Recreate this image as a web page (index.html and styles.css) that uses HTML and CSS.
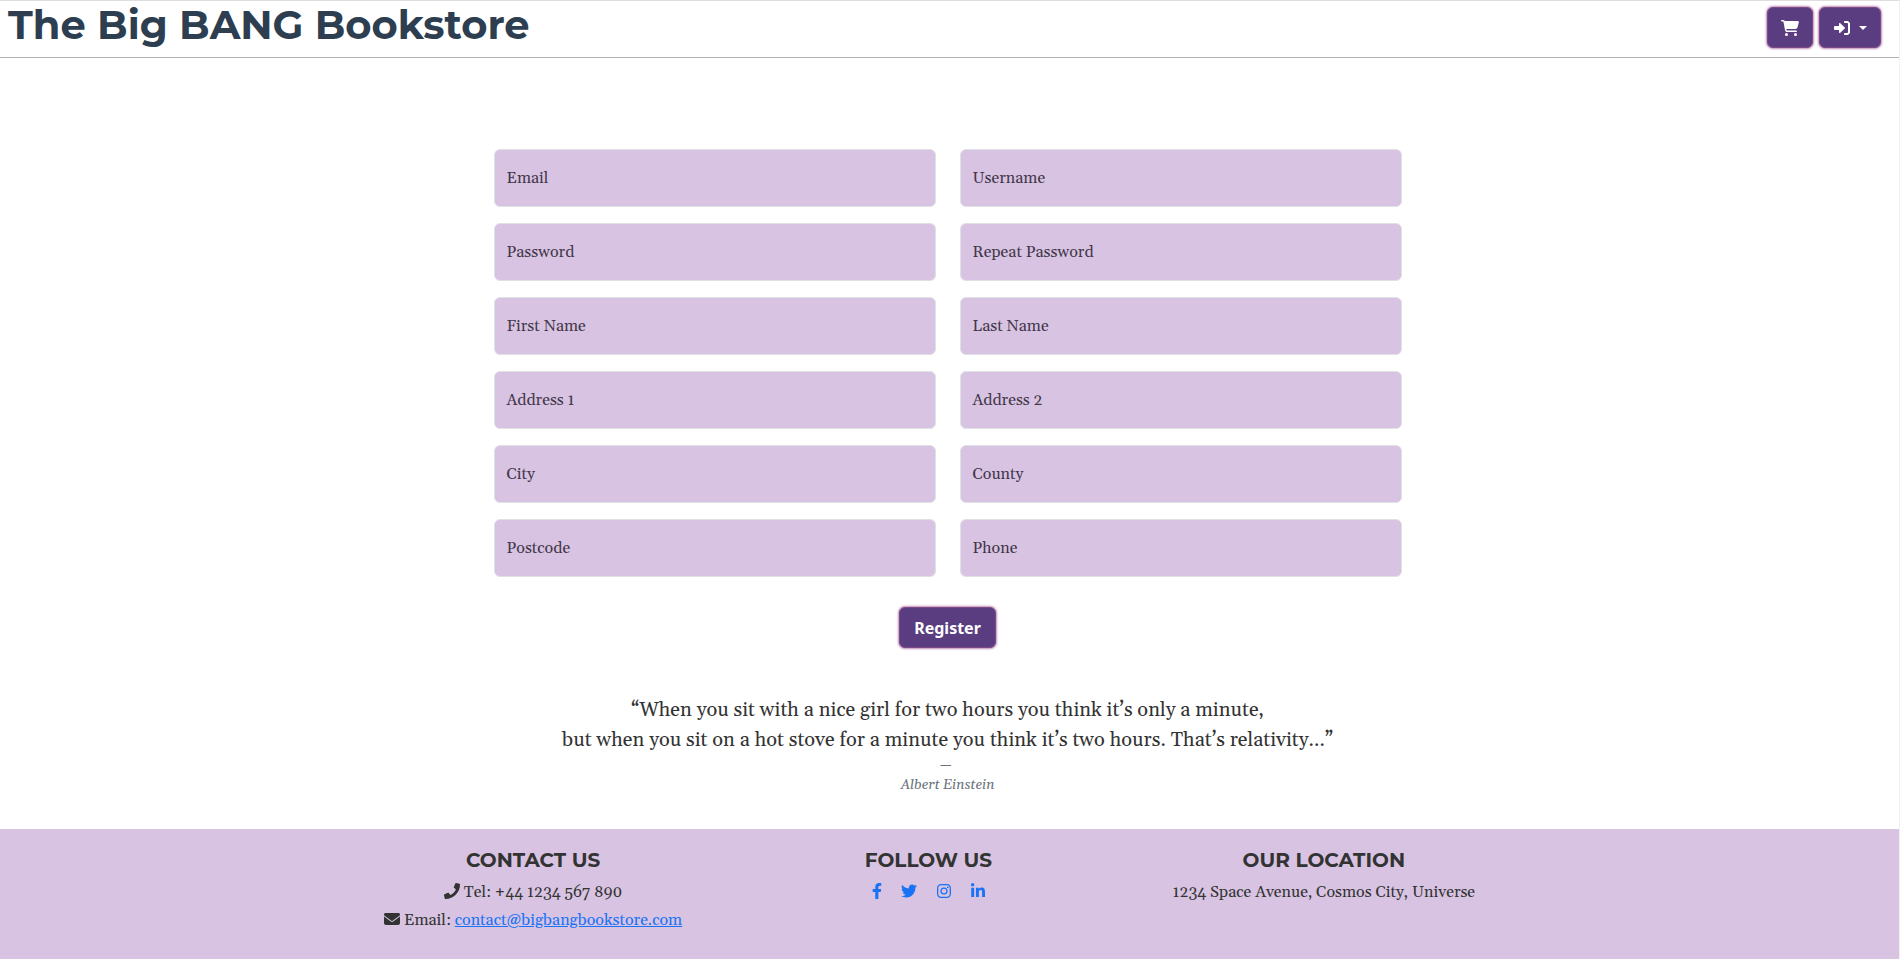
FILE: index.html
```html
<!DOCTYPE html>
<html lang="en">
<head>
<meta charset="utf-8">
<meta name="viewport" content="width=device-width, initial-scale=1">
<title>The Big BANG Bookstore</title>
<link rel="stylesheet" href="styles.css">
</head>
<body>
<header class="site-header">
  <h1 class="brand">The Big BANG Bookstore</h1>
  <nav class="actions" aria-label="Account">
    <button class="btn btn-icon" type="button" aria-label="Cart">
      <svg class="icon" viewBox="0 0 576 512" aria-hidden="true"><path d="M0 24C0 10.700 10.700 0 24 0H69.500c22 0 41.500 12.800 50.600 32h411c26.300 0 45.500 25 38.600 50.400l-41 152.300c-8.500 31.400-37 53.300-69.500 53.300H170.700l5.400 28.500c2.200 11.300 12.100 19.500 23.600 19.500H488c13.300 0 24 10.700 24 24s-10.700 24-24 24H199.700c-34.600 0-64.300-24.600-70.700-58.500L77.400 54.500c-.7-3.800-4-6.500-7.900-6.500H24C10.700 48 0 37.300 0 24zM128 464a48 48 0 1 1 96 0 48 48 0 1 1-96 0zm336-48a48 48 0 1 1 0 96 48 48 0 1 1 0-96z"/></svg>
    </button>
    <button class="btn btn-icon" type="button" aria-label="Sign in" aria-haspopup="true">
      <svg class="icon" viewBox="0 0 512 512" aria-hidden="true"><path d="M352 96h64c17.700 0 32 14.300 32 32v256c0 17.700-14.300 32-32 32h-64c-17.700 0-32 14.300-32 32s14.300 32 32 32h64c53 0 96-43 96-96V128c0-53-43-96-96-96h-64c-17.700 0-32 14.300-32 32s14.300 32 32 32zm-7.500 177.400c4.800-4.500 7.500-10.800 7.500-17.400s-2.700-12.900-7.500-17.400l-144-136c-7-6.600-17.200-8.400-26-4.600S160 110.400 160 120v72H32c-17.700 0-32 14.300-32 32v64c0 17.700 14.300 32 32 32h128v72c0 9.600 5.700 18.200 14.500 22s19 2 26-4.600l144-136z"/></svg>
      <span class="caret"></span>
    </button>
  </nav>
</header>

<main class="content">
  <form class="register">
    <div class="fields">
      <div class="field"><input id="email" type="email"><label for="email">Email</label></div>
      <div class="field"><input id="username" type="text"><label for="username">Username</label></div>
      <div class="field"><input id="password" type="password"><label for="password">Password</label></div>
      <div class="field"><input id="repeat" type="password"><label for="repeat">Repeat Password</label></div>
      <div class="field"><input id="first" type="text"><label for="first">First Name</label></div>
      <div class="field"><input id="last" type="text"><label for="last">Last Name</label></div>
      <div class="field"><input id="address1" type="text"><label for="address1">Address 1</label></div>
      <div class="field"><input id="address2" type="text"><label for="address2">Address 2</label></div>
      <div class="field"><input id="city" type="text"><label for="city">City</label></div>
      <div class="field"><input id="county" type="text"><label for="county">County</label></div>
      <div class="field"><input id="postcode" type="text"><label for="postcode">Postcode</label></div>
      <div class="field"><input id="phone" type="tel"><label for="phone">Phone</label></div>
    </div>
    <button class="btn" type="submit">Register</button>
  </form>
  <figure class="quote">
    <blockquote>“When you sit with a nice girl for two hours you think it’s only a minute,<br>but when you sit on a hot stove for a minute you think it’s two hours. That’s relativity...”</blockquote>
    <figcaption><span class="dash">—&nbsp;</span><cite>Albert Einstein</cite></figcaption>
  </figure>
</main>

<footer class="site-footer">
  <div class="columns">
    <section>
      <h2>CONTACT US</h2>
      <p><svg class="icon" viewBox="0 0 512 512" aria-hidden="true"><path d="M493 24.600l-104-24c-11.300-2.600-22.900 3.300-27.500 13.900l-48 112c-4.200 9.800-1.400 21.300 6.900 28l60.600 49.600c-36 76.700-98.900 140.500-177.200 177.200l-49.600-60.600c-6.800-8.300-18.200-11.100-28-6.900l-112 48C3.900 366.500-2 378.100.6 389.400l24 104C27.100 504.200 36.700 512 48 512c256.100 0 464-207.500 464-464 0-11.200-7.700-20.900-19-23.400z"/></svg> Tel: +44 1234 567 890</p>
      <p><svg class="icon" viewBox="0 0 512 512" aria-hidden="true"><path d="M48 64C21.500 64 0 85.500 0 112c0 15.100 7.100 29.300 19.200 38.400l217.600 163.200c11.400 8.500 27 8.500 38.400 0l217.600-163.200c12.100-9.100 19.200-23.300 19.200-38.400 0-26.500-21.500-48-48-48H48zM0 176v208c0 35.300 28.700 64 64 64h384c35.300 0 64-28.700 64-64V176L294.400 339.200c-22.800 17.100-54 17.100-76.800 0L0 176z"/></svg> Email: <a href="mailto:contact@bigbangbookstore.com">contact@bigbangbookstore.com</a></p>
    </section>
    <section>
      <h2>FOLLOW US</h2>
      <div class="social">
        <a href="#" aria-label="Facebook"><svg class="icon narrow" viewBox="0 0 320 512"><path d="M279.140 288l14.220-92.660h-88.910v-60.130c0-25.350 12.420-50.060 52.240-50.060h40.420V6.260S260.430 0 225.360 0c-73.220 0-121.080 44.380-121.080 124.720v70.620H22.890V288h81.390v224h100.170V288z"/></svg></a>
        <a href="#" aria-label="Twitter"><svg class="icon" viewBox="0 0 512 512"><path d="M459.370 151.716c.325 4.548.325 9.097.325 13.645 0 138.720-105.583 298.558-298.558 298.558-59.452 0-114.680-17.219-161.137-47.106 8.447.974 16.568 1.299 25.340 1.299 49.055 0 94.213-16.568 130.274-44.832-46.132-.975-84.792-31.188-98.112-72.772 6.498.974 12.995 1.624 19.818 1.624 9.421 0 18.843-1.300 27.614-3.573-48.081-9.747-84.143-51.980-84.143-102.985v-1.299c13.969 7.797 30.214 12.670 47.431 13.319-28.264-18.843-46.781-51.005-46.781-87.391 0-19.492 5.197-37.360 14.294-52.954 51.655 63.675 129.300 105.258 216.365 109.807-1.624-7.797-2.599-15.918-2.599-24.040 0-57.828 46.782-104.934 104.934-104.934 30.213 0 57.502 12.670 76.670 33.137 23.715-4.548 46.456-13.320 66.599-25.340-7.798 24.366-24.366 44.833-46.132 57.827 21.117-2.273 41.584-8.122 60.426-16.243-14.292 20.791-32.161 39.308-52.628 54.253z"/></svg></a>
        <a href="#" aria-label="Instagram"><svg class="icon" viewBox="0 0 512 512"><path fill-rule="evenodd" d="M160 32h192c71 0 128 57 128 128v192c0 71-57 128-128 128H160C89 480 32 423 32 352V160C32 89 89 32 160 32zm0 41c-48 0-87 39-87 87v192c0 48 39 87 87 87h192c48 0 87-39 87-87V160c0-48-39-87-87-87zM256 141a115 115 0 1 1 0 230 115 115 0 0 1 0-230zm0 40a75 75 0 1 0 0 150 75 75 0 0 0 0-150zM376 109a27 27 0 1 1 0 54 27 27 0 0 1 0-54z"/></svg></a>
        <a href="#" aria-label="LinkedIn"><svg class="icon linkedin" viewBox="0 0 448 512"><path d="M100.280 448H7.400V148.900h92.880zM53.790 108.100C24.090 108.100 0 83.500 0 53.800a53.790 53.790 0 0 1 107.580 0c0 29.700-24.100 54.300-53.790 54.300zM447.900 448h-92.680V302.400c0-34.700-.7-79.200-48.290-79.200-48.290 0-55.690 37.700-55.690 76.700V448h-92.780V148.900h89.080v40.800h1.300c12.400-23.500 42.690-48.300 87.880-48.300 94 0 111.280 61.900 111.280 142.300V448z"/></svg></a>
      </div>
    </section>
    <section>
      <h2>OUR LOCATION</h2>
      <p>1234 Space Avenue, Cosmos City, Universe</p>
    </section>
  </div>
</footer>
</body>
</html>
```
FILE: styles.css
```css
* { box-sizing: border-box; }

body {
  margin: 0;
  min-height: 100vh;
  display: flex;
  flex-direction: column;
  border-top: 1px solid #dedede;
  border-right: 1px solid #f1f1f1;
  background: #fff;
  color: #333;
  font-family: Georgia, Gelasio, "Liberation Serif", serif;
  font-size: 16px;
  line-height: 28px;
}

h1, h2, p, figure, blockquote { margin: 0; }

.icon {
  width: 16px;
  height: 16px;
  fill: currentColor;
  vertical-align: -2px;
}

.icon.narrow { width: 10px; }
.icon.linkedin { width: 14px; }

.site-header {
  display: flex;
  justify-content: space-between;
  align-items: flex-start;
  min-height: 57px;
  padding: 0 18px 0 8px;
  border-bottom: 1px solid #afb3b3;
}

.brand {
  color: #2c3e50;
  font-family: Montserrat, Inter, sans-serif;
  font-size: 40px;
  font-weight: 700;
  line-height: 48px;
}

.actions {
  display: flex;
  gap: 6px;
  padding-top: 6px;
}

.btn {
  display: flex;
  align-items: center;
  gap: 8px;
  height: 41px;
  padding: 0 14px;
  border: 1px solid #7d4a86;
  border-radius: 6px;
  box-shadow: 0 0 2px 1px #c08fb8;
  background: #593d80;
  color: #fff;
  font-family: "Noto Sans", sans-serif;
  font-size: 16px;
  font-weight: 700;
}

.btn-icon { padding: 0 13px; }

.btn-icon .icon { width: 18px; }

.caret {
  border: 4px solid transparent;
  border-top-color: currentColor;
  border-bottom: 0;
}

.content {
  flex: 1;
  padding-right: 4px;
}

.register {
  display: flex;
  flex-direction: column;
  align-items: center;
  gap: 30px;
  padding-top: 91px;
}

.fields {
  display: grid;
  grid-template-columns: 1fr 1fr;
  gap: 16px 24px;
  width: 100%;
  max-width: 908px;
}

.field { display: grid; }

.field input,
.field label {
  grid-area: 1 / 1;
}

.field input {
  width: 100%;
  height: 58px;
  padding: 0 12px;
  border: 1px solid #dee2e6;
  border-radius: 6px;
  background: #d8c3e2;
  color: #333;
  font: inherit;
}

.field label {
  align-self: center;
  justify-self: start;
  padding-left: 13px;
  color: #43384a;
}

.quote {
  padding-top: 47px;
  text-align: center;
}

.quote blockquote {
  font-size: 20px;
  line-height: 30px;
}

.quote figcaption {
  display: flex;
  flex-direction: column;
  color: #6c757d;
  font-size: 14px;
  line-height: 20px;
}

.site-footer {
  min-height: 130px;
  padding: 17px 42px 20px 0;
  background: #d8c3e2;
  text-align: center;
}

.columns {
  display: grid;
  grid-template-columns: repeat(3, 1fr);
  max-width: 1186px;
  margin: 0 auto;
}

.site-footer h2 {
  padding-bottom: 4px;
  font-family: Montserrat, Inter, sans-serif;
  font-size: 20px;
  font-weight: 700;
  line-height: 28px;
}

.site-footer a { color: #1a73f5; }

.social {
  display: flex;
  justify-content: center;
  gap: 19px;
}
```
